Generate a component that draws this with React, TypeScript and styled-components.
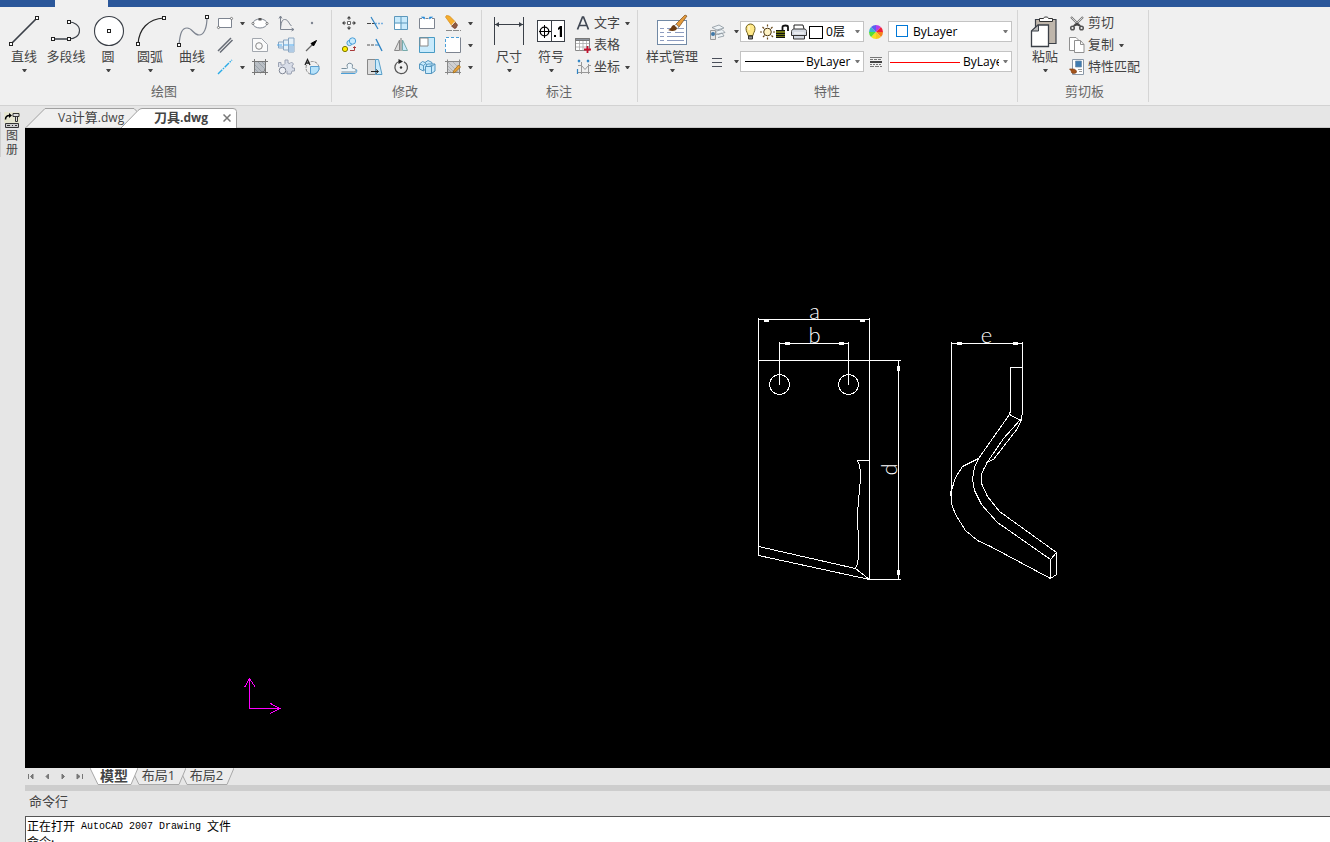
import React from "react";
import styled, { createGlobalStyle, css } from "styled-components";

const UI = `"Open Sans", "Noto Sans CJK SC", sans-serif`;
const INK = "#3b4048";
const BLUE = "#4a9fd8";
const PALE = "#c8eafc";
const GREY = "#7d8490";

const GlobalStyle = createGlobalStyle`
  * { box-sizing: border-box; }
  body { margin: 0; font-family: ${UI}; font-size: 12px; color: #444; background: #e6e6e6; overflow: hidden; }
  button { font: inherit; color: inherit; background: none; border: 0; padding: 0; margin: 0; }
  svg { display: block; flex: none; }
`;

const Shell = styled.div`
  display: flex;
  flex-direction: column;
  height: 100vh;
`;

/* ---------- ribbon ---------- */

const TitleStrip = styled.div`
  height: 7px;
  flex: none;
  padding-left: 55px;
  background: #2b579a;
`;

const ActiveRibbonTab = styled.div`
  width: 53px;
  height: 7px;
  background: #f0f0f0;
`;

const Ribbon = styled.header`
  display: flex;
  flex: none;
  padding: 3px 0;
  background: #f0f0f0;
  border-bottom: 1px solid #d2d2d2;
`;

const Group = styled.section<{ $left: number; $right: number }>`
  display: flex;
  flex-direction: column;
  padding: 2px ${(p) => p.$right}px 0 ${(p) => p.$left}px;
  border-right: 1px solid #d5d5d5;
`;

const GroupBody = styled.div`
  display: flex;
  height: 70px;
`;

const GroupTitle = styled.div`
  height: 20px;
  line-height: 18px;
  font-size: 13px;
  text-align: center;
  color: #666;
`;

const BigButton = styled.button<{ $width?: number }>`
  display: flex;
  flex-direction: column;
  align-items: center;
  width: ${(p) => p.$width ?? 42}px;
  height: 66px;
  padding-top: 1px;
  font-size: 13px;
  line-height: 14px;
  white-space: nowrap;
`;

const Caption = styled.span`
  margin: 0 -4px 6px;
`;

const ToolGrid = styled.div<{ $columns: string }>`
  display: grid;
  grid-template-columns: ${(p) => p.$columns};
  grid-auto-rows: 22px;
`;

const ToolButton = styled.button`
  display: flex;
  align-items: center;
  justify-content: center;
`;

const CommandList = styled.div`
  display: flex;
  flex-direction: column;
  padding-left: 2px;
`;

const CommandButton = styled.button`
  display: flex;
  align-items: center;
  height: 22px;
  font-size: 13px;
  line-height: 18px;
  white-space: nowrap;
`;

const CommandText = styled.span`
  margin-right: 5px;
  padding-bottom: 2px;
`;

const PropertyRows = styled.div`
  display: grid;
  grid-template-columns: 30px 8px 124px 24px 124px;
  grid-auto-rows: 21px;
  row-gap: 9px;
  padding-top: 9px;
`;

const ComboBox = styled.label`
  display: flex;
  align-items: center;
  height: 21px;
  background: #fff;
  border: 1px solid #c3c3c3;
  color: #000;
`;

const ComboSelect = styled.select<{ $indent?: number }>`
  flex: 1;
  min-width: 0;
  height: 19px;
  padding: 0 0 0 ${(p) => p.$indent ?? 0}px;
  border: 0;
  appearance: none;
  background: none;
  color: #000;
  font: 12px/19px ${UI};
`;

const ComboArrow = styled.span`
  display: flex;
  justify-content: center;
  width: 12px;
  flex: none;
  pointer-events: none;
`;

/* ---------- workspace ---------- */

const Workspace = styled.div`
  display: flex;
  flex: 1;
  min-height: 0;
`;

const SideBar = styled.aside`
  width: 25px;
  flex: none;
  padding-top: 6px;
`;

const SideTab = styled.button`
  display: flex;
  flex-direction: column;
  align-items: center;
  width: 24px;
  height: 45px;
  padding-right: 1px;
  border-left: 1px solid #cfcfcf;
  font-size: 12px;
  line-height: 14px;
`;

const Main = styled.main`
  display: flex;
  flex-direction: column;
  flex: 1;
  min-width: 0;
`;

const DocTabs = styled.nav`
  display: flex;
  height: 22px;
  flex: none;
  border-bottom: 1px solid #c9c9c9;
`;

const DocTab = styled.div<{ $active?: boolean }>`
  position: relative;
  display: flex;
  align-items: center;
  height: 22px;
  padding-top: 1px;
  ${(p) =>
    p.$active
      ? css`width: 117px; margin-left: -17px; padding-left: 33px; font-weight: 700;`
      : css`width: 113px; padding-left: 33px;`}
`;

const TabShape = styled.svg`
  position: absolute;
  inset: 0;
`;

const TabName = styled.button`
  position: relative;
  font-size: 12px;
  line-height: 18px;
  white-space: nowrap;
`;

const Han = styled.span`
  font-size: 13px;
`;

const CloseButton = styled.button`
  position: relative;
  margin-left: auto;
  margin-right: 7px;
`;

const Canvas = styled.div`
  flex: 1;
  min-height: 0;
  background: #000;
  overflow: hidden;
`;

const LayoutTabs = styled.nav`
  display: flex;
  height: 17px;
  flex: none;
  background: #e6e6e6;
`;

const PagerButton = styled.button`
  display: flex;
  align-items: center;
  justify-content: center;
  width: 16px;
  height: 17px;
`;

const Pager = styled.div`
  display: flex;
  width: 65px;
  margin-left: -2px;
  margin-right: 2px;
`;

const LayoutTab = styled.button<{ $active?: boolean; $level: number }>`
  position: relative;
  z-index: ${(p) => p.$level};
  height: 17px;
  line-height: 13px;
  padding-bottom: 3px;
  white-space: nowrap;
  ${(p) =>
    p.$active
      ? css`width: 48px; font-size: 14px; font-weight: 700;`
      : css`width: 55px; margin-left: -7px; font-size: 13px;`}
`;

const LayoutName = styled.span`
  position: relative;
`;

const Splitter = styled.div`
  height: 6px;
  flex: none;
  background: #cdcdcd;
`;

const CommandTitle = styled.div`
  height: 25px;
  flex: none;
  padding-left: 4px;
  font-size: 13px;
  line-height: 20px;
`;

const CommandLog = styled.div`
  height: 26px;
  flex: none;
  padding: 1px 0 0 1px;
  overflow: hidden;
  background: #fff;
  border-top: 1px solid #555;
  border-left: 1px solid #555;
  color: #000;
  font: 12px/16px "Noto Sans CJK SC", sans-serif;
`;

const LogLine = styled.div`
  display: flex;
  gap: 6px;
  height: 16px;
`;

const Mono = styled.span`
  font: 10px/18px "Liberation Mono", monospace;
`;

/* ---------- icons ---------- */

const Drop = ({ color = "#444" }: { color?: string }) => (
  <svg width="5" height="3" viewBox="0 0 5 3"><path d="M0 0h5L3 3H2z" fill={color} /></svg>
);

const Big = ({ children }: { children: React.ReactNode }) => (
  <svg width="36" height="36" viewBox="0 0 36 36" fill="none" stroke={INK}>{children}</svg>
);

const Small = ({ children }: { children: React.ReactNode }) => (
  <svg width="20" height="20" viewBox="0 0 20 20" fill="none" stroke={GREY}>{children}</svg>
);

const Node = ({ x, y }: { x: number; y: number }) => (
  <rect x={x - 1.5} y={y - 1.5} width="3" height="3" fill="#fff" stroke="#222" shapeRendering="crispEdges" />
);

const Tick = ({ x, y }: { x: number; y: number }) => <circle cx={x} cy={y} r="1.1" fill="#fff" stroke="#666" strokeWidth=".8" />;

const LineIcon = () => <Big><path d="M5 31 31 5" strokeWidth="1.7" /><Node x={5} y={31} /><Node x={31} y={5} /></Big>;
const PolylineIcon = () => (
  <Big><path d="M21 26c5.500 0 10.500-3 10.500-8.500S26 9 21 9" strokeWidth="1.1" /><path d="M5 26h16" strokeWidth="1.5" />
    <Node x={5} y={26} /><Node x={21} y={26} /><Node x={21} y={9} /></Big>
);
const CircleIcon = () => <Big><circle cx="19" cy="18" r="14.500" fill="#fff" strokeWidth="1.1" /><Node x={19} y={18} /></Big>;
const ArcIcon = () => <Big><path d="M6 31C7 16 16 6 32 5" strokeWidth="1.2" stroke="#222" /><Node x={6} y={31} /><Node x={32} y={5} /></Big>;
const SplineIcon = () => (
  <Big><path d="M5 32C6 20 8 15 13 15c6 0 6 7 12 7 5 0 8-7 8-18" stroke={GREY} strokeWidth="1.200" /><Node x={5} y={32} /><Node x={33} y={4} /></Big>
);
const DimensionIcon = () => (
  <Big><g shapeRendering="crispEdges"><path d="M3.500 4v28M32.500 4v28M4 11.500h28" /></g>
    <path d="m4 11.500 4-2.500v5zM32 11.500 28 9v5z" fill={INK} stroke="none" /></Big>
);
const SymbolIcon = () => (
  <Big><g shapeRendering="crispEdges"><path d="M4.500 7.500h27v21h-27zM18.500 8v20" fill="#fff" /><path d="M6 18.500h12M11.500 12v13" stroke="#000" /></g>
    <circle cx="11.500" cy="18.500" r="4.300" stroke="#000" strokeWidth="1.300" />
    <path d="M21 22h2v2h-2zM27 13h2v11h-2.200v-8l-1.800 1v-2z" fill="#000" stroke="none" /></Big>
);
const StyleIcon = () => (
  <Big><path d="M3.500 7.500h29v24h-29z" fill="#fff" stroke="#7189a5" shapeRendering="crispEdges" />
    <path d="M6 15.500h4M6 19.500h4M6 23.500h4M6 27.500h4M13 15.500h8M21 19.500h9M13 23.500h17M13 27.500h17M13 19.500h4M24 15.500h6" stroke="#8d9cc0" shapeRendering="crispEdges" />
    <path d="M22 11 31 2l2 1-8 11z" fill="#e39a3b" stroke="#7a4a1a" strokeWidth=".7" />
    <path d="m22 11 3 3-2 2-3-3z" fill="#eee" stroke="#666" strokeWidth=".6" />
    <path d="M20 12c-3 0-2 4-6 5 4 2 9 1 9-2z" fill="#6b3b12" stroke="none" /></Big>
);
const PasteIcon = () => (
  <Big><path d="M8.500 6.500h20.500v24H8.500z" fill="#bfb6ab" strokeWidth="1.200" />
    <path d="M12.500 8.500v-3h4c0-2 5-2 5 0h4v3z" fill="#fff" stroke="#333" />
    <path d="M11 12h10.500v21.500H4.500V18z" fill="#fff" strokeWidth="1.300" /><path d="M11.500 12v6H4.500z" fill="#bbb" /></Big>
);

const LayersIcon = () => (
  <Small>
    <path d="M5 5.500 12 3l5 3-7 2zM8 9.500l7-2 3 3-7 2zM8 13l7-2 2 3-6 1.500" fill="#eef3f6" stroke="#939da5" strokeWidth=".9" />
    <path d="M3.500 8.500h5v9h-5z" fill="#e6e6e6" stroke="#999" /><circle cx="6" cy="12" r="2" fill="#3f78a8" stroke="none" />
  </Small>
);
const LinesIcon = () => <Small><path d="M5 6.500h10M5 10.500h10M5 14.500h10" stroke="#4a4f5a" shapeRendering="crispEdges" /></Small>;
const LineTypeIcon = () => (
  <Small><g shapeRendering="crispEdges" stroke="#777"><path d="M4 5.500h12" /><path d="M4 7.500h12" strokeDasharray="3 1" /><path d="M4 10h12" strokeWidth="2" stroke="#444" /><path d="M4 12.500h12" strokeDasharray="2 1" /><path d="M4 14.500h12" strokeDasharray="4 1" /></g></Small>
);
const WheelIcon = () => {
  const colors = ["#b83ce8", "#f0203a", "#f4801c", "#f8c81c", "#f4e020", "#58e032", "#38b8d0", "#5a60f0"];
  return (
    <Small>
      {colors.map((c, i) => {
        const a = ((i * 45 - 90) * Math.PI) / 180;
        const b = a + Math.PI / 4;
        return <path key={c} fill={c} stroke="none" d={`M10 10 ${10 + 7 * Math.cos(a)} ${10 + 7 * Math.sin(a)}A7 7 0 0 1 ${10 + 7 * Math.cos(b)} ${10 + 7 * Math.sin(b)}z`} />;
      })}
    </Small>
  );
};

const LayerStateIcon = () => (
  <svg width="84" height="19" viewBox="0 0 84 19" fill="none" stroke="#222">
    <path d="M7 13.500C7 11 5 10 5 6.500a4.500 4.500 0 0 1 9 0c0 3.500-2 4.500-2 7z" fill="#ffe98a" stroke="#6b5a18" />
    <path d="M7.500 14h4v3h-4z" fill="#888" stroke="#333" /><path d="M8 4v4" stroke="#fff" />
    <circle cx="26.500" cy="10" r="3.800" fill="#fff3c4" stroke="#4a3510" />
    <path d="M26.500 2.500v2M26.500 15.500v2M19 10h2M32 10h2M21.500 5l1.500 1.500M30.500 13.500 32 15M31.500 5 30 6.500M22 15l1.500-1.500" stroke="#6b4a1a" strokeWidth="1.200" />
    <path d="M35 8.500h9v7h-9z" fill="#6f7410" stroke="none" /><path d="M35 8.500h9M35 11h9M35 13.500h9M35 15.500h9" stroke="#111" shapeRendering="crispEdges" />
    <path d="M41.500 8V5c0-2 5.500-2 5.500 0v4" stroke="#111" strokeWidth="1.800" />
    <path d="M53 7V3h9l1 4" fill="#fff" /><path d="M50.500 9.500c0-2 2-2.500 3-2.500h9c2 0 3 .5 3 2.500v4h-2v3.500h-11v-3.500h-2z" fill="#d5dae2" stroke="#333" /><path d="M52 13.500h12" stroke="#333" /><path d="M53 11h10" stroke="#fff" />
    <path d="M68.500 4.500h13v12h-13z" fill="#fff" stroke="#000" shapeRendering="crispEdges" />
  </svg>
);

const drawTools: (React.ReactNode | null)[] = [
  <Small><path d="M3.500 5.500h13v9h-13z" fill="#fff" /><Tick x={3.5} y={14.5} /><Tick x={16.5} y={5.5} /></Small>,
  <Drop />,
  <Small><ellipse cx="10" cy="10.500" rx="7" ry="4.500" fill="#fff" /><Tick x={3} y={10.5} /><Tick x={17} y={10.5} /><path d="M8.500 5h3v2.500h-3z" fill="#555" stroke="none" /></Small>,
  <Small><path d="M4.500 3v13.500H18M3 5.500l1.500-2.500L6 5.500M15.500 15l2.500 1.500-2.500 1.500" /><path d="M4.500 16C5 10 6 6.500 8.500 6.500c4 0 4 4 7 6.500" /></Small>,
  <Small><circle cx="10" cy="10" r="1.200" fill={GREY} stroke="none" /></Small>,

  <Small><path d="M3 16 16 3M5 17.500 17.500 5" stroke="#666b75" strokeWidth="1.500" /></Small>,
  null,
  <Small><path d="M2.500 3.500h9l6 6v7h-15z" fill="#fafafa" stroke="#a2a7ae" /><circle cx="9" cy="11" r="3.300" stroke="#888" /></Small>,
  <Small><path d="M2.500 7h5V5h5V3h5.500v14h-5.500v-2h-5v-2h-5z" fill="#e5f0f8" stroke="#8aa5c0" /><path d="M13 11h5v6h-5zM3 11h4v2H3z" fill="#b0cbe5" stroke="none" /><path d="M1 10h17.500" stroke="#54aef0" strokeDasharray="5 1" /><path d="M7.500 5v10M12.500 3v14" stroke="#8aa5c0" /></Small>,
  <Small><path d="m4 16 8-8" stroke="#666" strokeWidth="1.200" /><path d="m14.500 5.500-5.500 3 2.500 2.500z" fill="#000" stroke="#000" /></Small>,

  <Small><path d="M3 17 17 3" stroke="#29abe8" strokeWidth="1.400" strokeDasharray="6 1 1.500 1" /></Small>,
  <Drop />,
  <Small><path d="M4.500 4.500h11v11h-11z" fill="#b9bec4" stroke="#777" /><path d="m5 8 7 7M5 12l3 3M8 5l7 7M12 5l3 3" stroke="#929aa3" strokeWidth=".8" /><path d="M2 4.500h3M4.500 2v3M15.500 2v3M15 4.500h3M4.500 15v3M2 15.500h3M15.500 15v3M15 15.500h3M15 12c0 3-3 3-5 4" stroke="#777" /></Small>,
  <Small><path d="M2.500 10V5.500H5V8h2.500L9 6.500V3h3v3l2 .5 1.500-1.500 2 2-1.500 2 .5 2h2v3H16l-1 3h-4v-3" fill="#d8dde8" stroke="#9ba2b3" /><circle cx="6.500" cy="13.500" r="3.300" fill="#eef0f5" stroke="#7f8695" /></Small>,
  <Small><circle cx="10.500" cy="11" r="6.500" stroke="#888" strokeDasharray="3 1" /><path d="M8.500 9.500h8.500a6.500 6.500 0 0 1-8.500 7.500z" fill="#b6e2fa" stroke="#5a9fd0" /><path d="m3 8 2.500-5.500L8 8M4 6h3" stroke="#222" strokeWidth="1.300" /></Small>,
];

const modifyTools: React.ReactNode[] = [
  <Small><path d="M8.500 8.500h3v3h-3z" fill="#fff" stroke="#666" /><path d="M10 4v3M10 13v3M4 10h3M13 10h3" stroke="#555" /><path d="m10 3 2.200 2.500H7.800zM10 17l2.200-2.500H7.800zM3 10l2.500-2.200v4.400zM17 10l-2.500-2.200v4.400z" fill="#444" stroke="none" /></Small>,
  <Small><path d="M2 10.500h8" stroke="#444" strokeDasharray="4 1" /><path d="M10 10.500h8" stroke="#7ab0e0" strokeWidth="1.400" strokeDasharray="2 1" /><path d="m6 4 7 12" stroke="#2f84c4" strokeWidth="1.200" /></Small>,
  <Small><path d="M3.500 3.500h13v13h-13z" fill={PALE} stroke="#5d98bc" /><path d="M4 10.500h5.500V16H4z" fill="#fff" stroke="none" /><path d="M10 3.500v13M3.500 10h13" stroke="#5d98bc" /></Small>,
  <Small><path d="M5 5.500H2.500v10h15v-10H15M8.500 5.500h3" fill="#fff" /><path d="M4.500 4h3v2zM12.500 4h3l-3 2z" fill="#1f86d8" stroke="#1f86d8" strokeWidth=".6" /></Small>,
  <Small><path d="m2.500 4 1-1.500 3 .5 6 6-3.500 4z" fill="#f5ad2d" stroke="#d58a17" strokeWidth=".7" /><path d="m12.500 9.500 2 2.500-1.500 3-1.500.5L8.500 13z" fill="#8d5a42" stroke="#6b3422" strokeWidth=".7" /><path d="m12 8.500-3.500 4" stroke="#eee" /><path d="M3 17.500h15" stroke="#888" strokeDasharray="6 1" /></Small>,
  <Drop />,

  <Small><circle cx="6" cy="14" r="2.600" fill="#ffef00" stroke="#7c7600" /><circle cx="10.500" cy="8" r="2.600" fill={PALE} stroke={BLUE} /><circle cx="13.500" cy="6" r="3.200" fill={PALE} stroke={BLUE} /><path d="M11 15.500h4.500V12M14 13l1.500-1.500L17 13" stroke="#a83a3a" /></Small>,
  <Small><path d="M2 10h8" stroke="#555" strokeDasharray="3 1" strokeWidth="1.200" /><path d="M10 10h4" stroke="#2f84c4" /><path d="m11 4 6 12" stroke="#2f84c4" strokeWidth="1.400" /></Small>,
  <Small><path d="M8.500 5v10.500h-5z" fill="#ddd" stroke="#888" /><path d="M11.500 5v10.500h5z" fill={PALE} stroke="#7aa" /><path d="M10 3v13" stroke="#777" /></Small>,
  <Small><path d="M2.500 2.500h15v15h-15z" fill={PALE} stroke="#489bc4" /><path d="M3 3h8v8H3z" fill="#fff" stroke="#888" /></Small>,
  <Small><path d="M2.500 2.500h15v15h-15z" fill="#fff" stroke="none" /><path d="M17.500 2.500v15h-15" /><path d="M2.500 17V2.500h15" stroke={BLUE} strokeDasharray="3 2" /></Small>,
  <Drop />,

  <Small><path d="M2.500 11.500h5c2 0 .5-1.500.5-3.500a3 3 0 0 1 5.500 0c0 2-1 3.500 1 3.500 3 0 3.500 3.500 0 3.500h-12" fill="#edf5fa" stroke="#7a8f9d" /><path d="M2 16.500h13c3 0 3-3 2.500-4" stroke={BLUE} /></Small>,
  <Small><path d="M2.500 2.500h8v15h-8z" fill="#ddd" stroke="#888" /><path d="M10.500 2.500h3l3.500 15h-6.500z" fill={PALE} stroke="#5a9fc8" /><path d="M6 14.500h7M11 12.500l2.500 2-2.500 2" stroke="#222" /></Small>,
  <Small><path d="M8 4.500a6.300 6.300 0 1 0 5 .3" stroke="#555" strokeWidth="1.300" /><path d="m7.500 2 4.500 2.500L7.500 7z" fill="#222" stroke="none" /><circle cx="10" cy="10.500" r="1.200" fill="#333" stroke="none" /></Small>,
  <Small><g fill={PALE} stroke="#5597c0"><path d="m2.500 7 3-2.500 4 1.500v5l-3 3-4-2zM2.500 7l4 1.500v5M6.500 8.500 9.500 6" /><path d="m8 5.500 3-2 4 2v3l-4 1z" /><path d="M8.500 9.500h6v7h-6zM8.500 9.500l2-2.500h7.500v7l-3.500 2.500v-7L18 7" /></g></Small>,
  <Small><path d="M4.500 4.500h12v11h-12z" fill="#cfd0d2" stroke="#888" /><path d="m5 9 6 6M5 5l10 10M10 5l6 6M5 12l3 3" stroke="#a8abb0" strokeWidth=".8" /><path d="M2 4.500h16M4.500 2.500v15M2 15.500h16M16.500 2.500v15" stroke="#888" /><path d="m10.500 14 5-6 2 2-5 5-2.500 1z" fill="#eba43a" stroke="#9a6a1a" strokeWidth=".8" /></Small>,
  <Drop />,
];

const TextIcon = () => <Small><path d="M3.500 16.500 8.500 4h1l5 12.500M5 12.500h8" stroke="#3f4652" strokeWidth="1.700" /></Small>;
const TableIcon = () => (
  <Small><path d="M1.500 3.500h14v12h-14z" fill="#fff" stroke="#888" /><path d="M1.500 3.500h14v2h-14z" fill="#8c929b" stroke="#777" /><path d="M2 8.500h13M2 12h13M5.500 6v9.500M9 6v9.500M12.500 6v9.500" stroke="#aaa" strokeWidth=".8" /><path d="M13.500 11v7M10 14.500h7" stroke="#c4122e" strokeWidth="1.800" /></Small>
);
const CoordinateIcon = () => (
  <Small><path d="M7.500 5v12M14.500 7v10M4 8.500h3.500l3.500 4 3.500-4H17M4 15.500h12" stroke="#999" /><path d="m4 3 2 2M6 3 4 5M13 3l2 2M15 3l-2 2M3.500 12v5" stroke="#2f84c4" strokeWidth="1.200" /></Small>
);
const CutIcon = () => (
  <Small><path d="m3 4 9 9M15 4l-9 9" stroke="#777" strokeWidth="2.200" /><path d="m3.500 4.500 5 5M14.500 4.500l-5 5" stroke="#eee" strokeWidth=".8" /><circle cx="4.500" cy="15" r="1.800" stroke="#555" strokeWidth="1.500" /><circle cx="13.500" cy="15" r="1.800" stroke="#555" strokeWidth="1.500" /><path d="m5.500 13 3.500-3 3.500 3-3.500-1z" fill="#444" stroke="#444" /></Small>
);
const CopyIcon = () => (
  <Small><path d="M1.500 2.500H8l3 3v10H1.500z" fill="#fff" stroke="#909090" /><path d="M6.500 5.500h6l3.500 4v8H6.500z" fill="#fff" stroke="#909090" /><path d="M12.500 5.500v4H16" stroke="#909090" /></Small>
);
const MatchIcon = () => (
  <Small><path d="M4.500 2.500h11v15h-11z" fill="#fff" stroke="#8a98a8" /><path d="M7.500 4h6v6h-6z" fill="#3f7bb0" stroke="#6f8cab" strokeWidth=".7" /><path d="M10 12.500h4M11 14.500h3" stroke="#999" /><path d="M1.500 12h3c3 0 4 1.500 4 3s-4 2-5 .5c0-1.500-1-2.500-2-3.500z" fill="#a3541c" stroke="#7c3a10" strokeWidth=".7" /></Small>
);
const LibraryIcon = () => (
  <svg width="18" height="17" viewBox="0 0 18 17" fill="none" stroke="#333">
    <path d="M1 0h16v11H1z" fill="#e6e6d0" stroke="none" />
    <path d="M2.500 7.500c0-3 1-4 4-4" strokeWidth="1.500" stroke="#000" /><path d="m6 1 3 2.500L6 6z" fill="#000" stroke="none" />
    <path d="M10 1.500h6v3h-6zM12.500 4.500h2v5h-2z" fill="#ddd" /><path d="M2.500 11.500h13v4h-13z" fill="#ccc" /><path d="M4 13.500h3M9 13.500h1M12 13.500h2" />
  </svg>
);

/* ---------- model space ---------- */

const Drawing = () => (
  <svg width="100%" height="100%" fill="none" stroke="#fff" shapeRendering="crispEdges" role="img" aria-label="刀具">
    <g transform="translate(-24.5 -127.5)">
      <path d="M758 317v238M869 317v262M758 319h111M779 341v43M848 341v43M779 343h69M758 360h142M898 360v219M869 579h31" />
      <path d="M763 320h5M859 320h5" strokeWidth="2" />
      <path d="M784 343h5M838 343h5" strokeWidth="3" />
      <path d="M898 365v5M898 569v5" strokeWidth="3" />
      <circle cx="779" cy="384" r="10" /><circle cx="848" cy="384" r="10" />
      <path d="M758 546 855 568l14 11M758 555l111 24" />
      <path d="M869 460h-12l2 5 1 6v7l-2 22-1 13 1 32v12l-1 6-2 5" />
      <path d="M951 341v152M951 343h71M1022 341v72l-2 7-11-6 1-4v-43h12" />
      <path d="M956 343h5M1012 343h5" strokeWidth="3" />
      <path d="m1009 414-31 44-4 9-2 12 2 11 7 14 16 18 53 37" />
      <path d="m1020 419-17 19-15 22-5 9-2 5v9l6 13 12 15 57 41-6 7v19" />
      <path d="m1021 419-4 9-24 31-7 3" />
      <path d="m978 458-16 8-7 11-4 13v13l4 11 10 16 12 10 13 6 60 32 6-4v-22" />
      <path d="M950 490v5" />
      <g fill="#fff" stroke="none" fontFamily="Lato, sans-serif" fontWeight="300" fontSize="22" textAnchor="middle">
        <text x="814" y="318">a</text>
        <text x="814" y="342">b</text>
        <text x="986" y="342">e</text>
        <text transform="translate(896 469) rotate(-90)">d</text>
      </g>
      <path d="M249 678v30M249 708h30M244 687l5-9 6 9M270 703l9 5-9 5" stroke="#f0f" />
    </g>
  </svg>
);

const pager = [
  { label: "第一个", d: "M2.500 2v5M7 2v5L4.500 4.500z" },
  { label: "上一个", d: "M6.500 2v5L4 4.500z" },
  { label: "下一个", d: "M4 2v5l2.500-2.500z" },
  { label: "最后一个", d: "M8.500 2v5M3 2v5l3-2.500z" },
];

const ActiveLayoutShape = () => (
  <TabShape width="48" height="17" viewBox="0 0 48 17">
    <path d="M0 0 8 16.500h33L48 0" fill="#fff" stroke="#a8a8a8" />
  </TabShape>
);

const LayoutShape = () => (
  <TabShape width="55" height="17" viewBox="0 0 55 17">
    <path d="M0 0 8 16.500h40L55 0" fill="#ececec" stroke="#a8a8a8" />
  </TabShape>
);

const BigTool = ({ icon, text, drop = true, width }: { icon: React.ReactNode; text: string; drop?: boolean; width?: number }) => (
  <BigButton $width={width}>{icon}<Caption>{text}</Caption>{drop && <Drop />}</BigButton>
);

const Command = ({ icon, text, drop }: { icon: React.ReactNode; text: string; drop?: boolean }) => (
  <CommandButton>{icon}<CommandText>{text}</CommandText>{drop && <Drop />}</CommandButton>
);

export default function App() {
  return (
    <Shell>
      <GlobalStyle />
      <TitleStrip><ActiveRibbonTab /></TitleStrip>
      <Ribbon>
        <Group $left={3} $right={6}>
          <GroupBody>
            <BigTool icon={<LineIcon />} text="直线" />
            <BigTool icon={<PolylineIcon />} text="多段线" drop={false} />
            <BigTool icon={<CircleIcon />} text="圆" />
            <BigTool icon={<ArcIcon />} text="圆弧" />
            <BigTool icon={<SplineIcon />} text="曲线" />
            <ToolGrid $columns="24px 10px 26px 26px 26px">
              {drawTools.map((t, i) => (t ? <ToolButton key={i}>{t}</ToolButton> : <span key={i} />))}
            </ToolGrid>
          </GroupBody>
          <GroupTitle>绘图</GroupTitle>
        </Group>

        <Group $left={4} $right={7}>
          <GroupBody>
            <ToolGrid $columns="26px 26px 26px 26px 26px 8px">
              {modifyTools.map((t, i) => <ToolButton key={i}>{t}</ToolButton>)}
            </ToolGrid>
          </GroupBody>
          <GroupTitle>修改</GroupTitle>
        </Group>

        <Group $left={6} $right={7}>
          <GroupBody>
            <BigTool icon={<DimensionIcon />} text="尺寸" />
            <BigTool icon={<SymbolIcon />} text="符号" />
            <CommandList>
              <Command icon={<TextIcon />} text="文字" drop />
              <Command icon={<TableIcon />} text="表格" />
              <Command icon={<CoordinateIcon />} text="坐标" drop />
            </CommandList>
          </GroupBody>
          <GroupTitle>标注</GroupTitle>
        </Group>

        <Group $left={4} $right={5}>
          <GroupBody>
            <BigTool icon={<StyleIcon />} text="样式管理" width={60} />
            <PropertyRows>
              <ToolButton><LayersIcon /></ToolButton>
              <ToolButton><Drop /></ToolButton>
              <ComboBox>
                <LayerStateIcon />
                <ComboSelect aria-label="图层" $indent={1}><option>0层</option></ComboSelect>
                <ComboArrow><Drop color="#777" /></ComboArrow>
              </ComboBox>
              <ToolButton><WheelIcon /></ToolButton>
              <ComboBox>
                <svg width="20" height="19" viewBox="0 0 20 19"><path d="M7.500 3.500h11v11h-11z" fill="#fff" stroke="#0078d7" shapeRendering="crispEdges" /></svg>
                <ComboSelect aria-label="颜色" $indent={4}><option>ByLayer</option></ComboSelect>
                <ComboArrow><Drop color="#777" /></ComboArrow>
              </ComboBox>
              <ToolButton><LinesIcon /></ToolButton>
              <ToolButton><Drop /></ToolButton>
              <ComboBox>
                <svg width="63" height="19" viewBox="0 0 63 19"><path d="M4 9.500h59" stroke="#000" shapeRendering="crispEdges" /></svg>
                <ComboSelect aria-label="线型" $indent={2}><option>ByLayer</option></ComboSelect>
                <ComboArrow><Drop color="#777" /></ComboArrow>
              </ComboBox>
              <ToolButton><LineTypeIcon /></ToolButton>
              <ComboBox>
                <svg width="71" height="19" viewBox="0 0 71 19"><path d="M1 10.500h70" stroke="#f00" shapeRendering="crispEdges" /></svg>
                <ComboSelect aria-label="线宽" $indent={3}><option>ByLayer</option></ComboSelect>
                <ComboArrow><Drop color="#777" /></ComboArrow>
              </ComboBox>
            </PropertyRows>
          </GroupBody>
          <GroupTitle>特性</GroupTitle>
        </Group>

        <Group $left={6} $right={3}>
          <GroupBody>
            <BigTool icon={<PasteIcon />} text="粘贴" />
            <CommandList>
              <Command icon={<CutIcon />} text="剪切" />
              <Command icon={<CopyIcon />} text="复制" drop />
              <Command icon={<MatchIcon />} text="特性匹配" />
            </CommandList>
          </GroupBody>
          <GroupTitle>剪切板</GroupTitle>
        </Group>
      </Ribbon>

      <Workspace>
        <SideBar>
          <SideTab><LibraryIcon /><span>图</span><span>册</span></SideTab>
        </SideBar>
        <Main>
          <DocTabs>
            <DocTab>
              <TabShape width="113" height="22" viewBox="0 0 113 22">
                <path d="M1 21.500 20 2.500h89l3 3v16" fill="#f0f0f0" stroke="#a0a0a0" />
              </TabShape>
              <TabName>Va<Han>计算</Han>.dwg</TabName>
            </DocTab>
            <DocTab $active>
              <TabShape width="117" height="22" viewBox="0 0 117 22">
                <path d="M0 22 17 4.500q2-2 4-2h91q3.500 0 3.500 3V22" fill="#fff" stroke="#a0a0a0" />
              </TabShape>
              <TabName><Han>刀具</Han>.dwg</TabName>
              <CloseButton aria-label="关闭">
                <svg width="8" height="8" viewBox="0 0 8 8"><path d="m.5.500 7 7M7.500.500l-7 7" stroke="#777" strokeWidth="1.500" /></svg>
              </CloseButton>
            </DocTab>
          </DocTabs>
          <Canvas><Drawing /></Canvas>
          <LayoutTabs>
            <Pager>
              {pager.map((p) => (
                <PagerButton key={p.label} aria-label={p.label}>
                  <svg width="10" height="9" viewBox="0 0 10 9"><path d={p.d} fill="#777" stroke="#777" /></svg>
                </PagerButton>
              ))}
            </Pager>
            <LayoutTab $active $level={3}><ActiveLayoutShape /><LayoutName>模型</LayoutName></LayoutTab>
            <LayoutTab $level={2}><LayoutShape /><LayoutName>布局1</LayoutName></LayoutTab>
            <LayoutTab $level={1}><LayoutShape /><LayoutName>布局2</LayoutName></LayoutTab>
          </LayoutTabs>
          <Splitter />
          <CommandTitle>命令行</CommandTitle>
          <CommandLog>
            <LogLine><span>正在打开</span><Mono>AutoCAD 2007 Drawing</Mono><span>文件</span></LogLine>
            <LogLine><span>命令:</span></LogLine>
          </CommandLog>
        </Main>
      </Workspace>
    </Shell>
  );
}
